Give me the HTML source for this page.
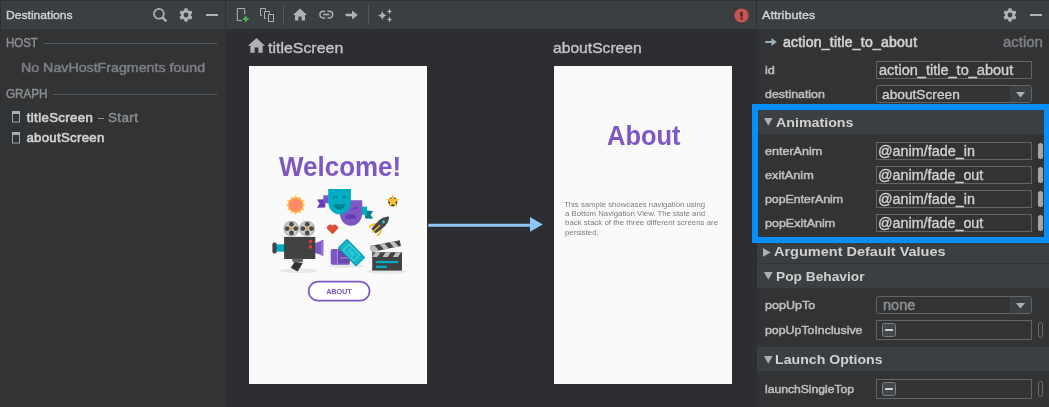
<!DOCTYPE html>
<html>
<head>
<meta charset="utf-8">
<style>
html,body{margin:0;padding:0;}
body{width:1049px;height:407px;overflow:hidden;background:#2c2e32;font-family:"Liberation Sans",sans-serif;position:relative;}
.abs{position:absolute;}
.t{position:absolute;white-space:nowrap;line-height:1;-webkit-font-smoothing:antialiased;}
#wrap{position:absolute;left:0;top:0;width:1049px;height:407px;will-change:transform;}
svg{position:absolute;overflow:visible;}
.inp{position:absolute;border:1px solid #646464;background:#313335;box-sizing:border-box;}
.sec{position:absolute;left:757px;width:292px;background:#3c3f41;}
.pillf{position:absolute;left:1038px;width:5px;height:16px;border-radius:2.5px;background:#a4a6a8;}
.pillo{position:absolute;left:1038px;width:5px;height:16px;border-radius:2.5px;border:1px solid #6a6c6e;box-sizing:border-box;}
.cb{position:absolute;left:882px;width:14px;height:14px;border-radius:2.5px;background:#43474a;border:1px solid #7c7e80;box-sizing:border-box;}
.cb i{position:absolute;left:2px;top:4.9px;width:8px;height:2.2px;background:#cfcfcf;border-radius:0.5px;}
</style>
</head>
<body>
<div id="wrap">
<!-- panel backgrounds -->
<div class="abs" style="left:0;top:0;width:225px;height:407px;background:#313335;"></div>
<div class="abs" style="left:226px;top:0;width:530px;height:407px;background:#2c2e32;"></div>
<div class="abs" style="left:757px;top:0;width:292px;height:407px;background:#313335;"></div>
<!-- header bar -->
<div class="abs" style="left:0;top:0;width:1049px;height:29px;background:#3c3f41;"></div>
<div class="abs" style="left:0;top:0;width:1049px;height:1px;background:#2e3032;"></div>
<div class="abs" style="left:0;top:0;width:1px;height:407px;background:#2e3032;"></div>
<div class="abs" style="left:225px;top:0;width:1px;height:29px;background:#2d2f31;"></div><div class="abs" style="left:225px;top:29px;width:1px;height:378px;background:#302f30;"></div>
<div class="abs" style="left:756px;top:0;width:1px;height:29px;background:#2d2f31;"></div><div class="abs" style="left:756px;top:29px;width:1px;height:378px;background:#2e2f32;"></div>

<!-- left panel lines -->
<div class="abs" style="left:44px;top:43px;width:173px;height:1px;background:#55585a;"></div>
<div class="abs" style="left:53px;top:94px;width:164px;height:1px;background:#55585a;"></div>

<div class="abs" style="left:97.6px;top:117.5px;width:6.2px;height:1.5px;background:#8b8d8f;"></div>
<!-- left header icons -->
<svg style="left:152px;top:7px;" width="16" height="16" viewBox="0 0 16 16"><circle cx="6.9" cy="6.8" r="4.9" fill="none" stroke="#afb1b3" stroke-width="1.8"/><path d="M10.3 10.3 L14.4 14.4" stroke="#afb1b3" stroke-width="2.4" stroke-linecap="butt"/></svg>
<svg style="left:179px;top:8px;" width="14" height="14" viewBox="-7 -7 14 14"><g fill="#afb1b3"><circle r="5"/><rect x="-1.8" y="-6.7" width="3.6" height="13.4" rx="1.1"/><rect x="-1.8" y="-6.7" width="3.6" height="13.4" rx="1.1" transform="rotate(60)"/><rect x="-1.8" y="-6.7" width="3.6" height="13.4" rx="1.1" transform="rotate(120)"/></g><circle r="2.4" fill="#3c3f41"/></svg>
<div class="abs" style="left:206px;top:14px;width:12px;height:2px;background:#afb1b3;"></div>

<!-- toolbar icons -->
<svg style="left:236px;top:7px;" width="16" height="16" viewBox="0 0 16 16"><path d="M8.7 7.5 V1.5 H1.3 V13.6 H6" fill="none" stroke="#afb1b3" stroke-width="1"/><path d="M9.8 9.2 V14.8 M7 12 H12.6" stroke="#4db35a" stroke-width="2"/></svg>
<svg style="left:259px;top:7px;" width="16" height="16" viewBox="0 0 16 16"><g fill="none" stroke="#afb1b3" stroke-width="1"><path d="M6.5 3.5 V1.5 H1.5 V8.5 H3"/><path d="M10.5 6.5 V4.5 H5.5 V11.5 H7"/><rect x="9.5" y="7.5" width="5" height="7"/></g></svg>
<div class="abs" style="left:283px;top:5px;width:1px;height:20px;background:#55585a;"></div>
<svg style="left:293px;top:8px;" width="14" height="13" viewBox="0 0 14 13"><path d="M7 0.6 L14 7 H12 V12.6 H8.6 V8.4 H5.4 V12.6 H2 V7 H0 Z" fill="#afb1b3"/></svg>
<svg style="left:318.6px;top:10.2px;" width="15" height="9.4" viewBox="0 0 16 10"><g fill="none" stroke="#afb1b3" stroke-width="1.6"><path d="M6.6 1.2 H4.6 A3.6 3.6 0 0 0 4.6 8.4 H6.6"/><path d="M9 1.2 H11 A3.6 3.6 0 0 1 11 8.4 H9"/><path d="M4.6 4.8 H11" stroke-width="1.8"/></g></svg>
<svg style="left:345px;top:10px;" width="14" height="10" viewBox="0 0 14 10"><path d="M0.6 3.8 H7 V0.6 L12.8 5 L7 9.4 V6.2 H0.6 Z" fill="#afb1b3"/></svg>
<div class="abs" style="left:368px;top:5px;width:1px;height:20px;background:#55585a;"></div>
<svg style="left:377px;top:8px;" width="16" height="15" viewBox="0 0 16 15"><g fill="#afb1b3"><path d="M5.3 2.5 Q5.8 6.9 10 7.4 Q5.8 7.9 5.3 12.4 Q4.8 7.9 0.6 7.4 Q4.8 6.9 5.3 2.5Z"/><path d="M12.5 0.6 Q12.8 3.2 15.4 3.5 Q12.8 3.8 12.5 6.4 Q12.2 3.8 9.6 3.5 Q12.2 3.2 12.5 0.6Z"/><path d="M12.5 8.6 Q12.8 11.2 15.4 11.5 Q12.8 11.8 12.5 14.4 Q12.2 11.8 9.6 11.5 Q12.2 11.2 12.5 8.6Z"/></g></svg>
<!-- error icon -->
<svg style="left:733.5px;top:7.6px;" width="15" height="15" viewBox="0 0 15 15"><circle cx="7.5" cy="7.5" r="7.1" fill="#c75450"/><rect x="6.4" y="3.8" width="2.2" height="4.8" fill="#2b2b2b"/><rect x="6.4" y="9.7" width="2.2" height="1.7" fill="#2b2b2b"/></svg>
<!-- right header icons -->
<svg style="left:1003px;top:8px;" width="14" height="14" viewBox="-7 -7 14 14"><g fill="#afb1b3"><circle r="5"/><rect x="-1.8" y="-6.7" width="3.6" height="13.4" rx="1.1"/><rect x="-1.8" y="-6.7" width="3.6" height="13.4" rx="1.1" transform="rotate(60)"/><rect x="-1.8" y="-6.7" width="3.6" height="13.4" rx="1.1" transform="rotate(120)"/></g><circle r="2.4" fill="#3c3f41"/></svg>
<div class="abs" style="left:1030px;top:14px;width:12px;height:2px;background:#afb1b3;"></div>

<!-- left list icons -->
<svg style="left:12px;top:111.3px;" width="8" height="12" viewBox="0 0 8 12"><rect x="0.5" y="0.5" width="7" height="10.5" fill="none" stroke="#9aa7b0" stroke-width="1"/><rect x="0" y="0" width="8" height="3" fill="#a2b1bc"/></svg>
<svg style="left:12px;top:131.5px;" width="8" height="12" viewBox="0 0 8 12"><rect x="0.5" y="0.5" width="7" height="10.5" fill="none" stroke="#9aa7b0" stroke-width="1"/><rect x="0" y="0" width="8" height="3" fill="#a2b1bc"/></svg>

<!-- canvas -->
<svg style="left:248px;top:38px;" width="17" height="15" viewBox="0 0 17 15"><path d="M8.5 0 L17 7.8 H14.6 V14.8 H10.4 V9.6 H6.6 V14.8 H2.4 V7.8 H0 Z" fill="#afb1b3"/></svg>
<div class="abs" style="left:249px;top:66px;width:178px;height:318px;background:#fafafa;"></div>
<div class="abs" style="left:554px;top:66px;width:178px;height:318px;background:#fafafa;"></div>
<svg style="left:0;top:0;" width="1049" height="407"><rect x="308.6" y="281.7" width="61" height="19" rx="9.5" fill="#ffffff" stroke="#7e57c2" stroke-width="1.8"/></svg>
<!-- arrow -->
<svg style="left:0;top:0;" width="1049" height="407"><path d="M428.3 225.25 H532" stroke="#8ec6fa" stroke-width="2.9" fill="none"/></svg>
<svg style="left:530px;top:217.4px;" width="13" height="15" viewBox="0 0 13 15"><path d="M0 0 L12.8 7.4 L0 14.8 Z" fill="#8ec6fa"/></svg>
<svg style="left:0;top:0;" width="1049" height="407" viewBox="0 0 1049 407">
<!-- shadows -->
<ellipse cx="299" cy="270.8" rx="19" ry="2.3" fill="#e8e8e8"/>
<ellipse cx="346.3" cy="265.8" rx="17.7" ry="2.2" fill="#e8e8e8"/>
<ellipse cx="386.3" cy="271.5" rx="19.5" ry="2.4" fill="#e8e8e8"/>
<!-- sunburst -->
<g transform="translate(295.7 205)">
<path d="M0.00 -9.90 L1.76 -6.57 L4.95 -8.57 L4.81 -4.81 L8.57 -4.95 L6.57 -1.76 L9.90 0.00 L6.57 1.76 L8.57 4.95 L4.81 4.81 L4.95 8.57 L1.76 6.57 L0.00 9.90 L-1.76 6.57 L-4.95 8.57 L-4.81 4.81 L-8.57 4.95 L-6.57 1.76 L-9.90 0.00 L-6.57 -1.76 L-8.57 -4.95 L-4.81 -4.81 L-4.95 -8.57 L-1.76 -6.57 Z" fill="#fbc02d"/>
<path d="M2.10 -7.82 L2.95 -5.11 L5.73 -5.73 L5.11 -2.95 L7.82 -2.10 L5.90 0.00 L7.82 2.10 L5.11 2.95 L5.73 5.73 L2.95 5.11 L2.10 7.82 L0.00 5.90 L-2.10 7.82 L-2.95 5.11 L-5.73 5.73 L-5.11 2.95 L-7.82 2.10 L-5.90 -0.00 L-7.82 -2.10 L-5.11 -2.95 L-5.73 -5.73 L-2.95 -5.11 L-2.10 -7.82 L-0.00 -5.90 Z" fill="#ff8a65"/>
</g>
<!-- ribbons -->
<path d="M317 199.6 L325.3 199.3 V207.4 L317 207.8 L319.6 203.6 Z" fill="#673ab7"/>
<rect x="323.3" y="195.3" width="5.4" height="8" fill="#7e57c2"/>
<path d="M365.1 210.5 L373.1 211 L370.6 214.8 L373.1 218.8 L365.1 218.4 Z" fill="#00838f"/>
<rect x="361.5" y="206.6" width="5.6" height="8.2" fill="#00acc1"/>
<!-- purple mask -->
<path d="M339.9 200.2 H362.2 V213.5 A11.15 12.3 0 0 1 339.9 213.5 Z" fill="#7e57c2"/>
<path d="M352.9 209 A2.3 2 0 0 1 357.5 209 Z" fill="#673ab7"/>
<path d="M345.2 218.8 A5.65 4.6 0 0 1 356.5 218.8 Z" fill="#673ab7"/>
<!-- teal mask -->
<path d="M328.2 189 H350.9 V202 A11.35 12.5 0 0 1 328.2 202 Z" fill="#00acc1"/>
<path d="M332.9 197.8 A2.3 2 0 0 1 337.5 197.8 Z" fill="#00838f"/>
<path d="M342 197.8 A2.3 2 0 0 1 346.6 197.8 Z" fill="#00838f"/>
<path d="M333.6 204.2 H345.2 A5.8 5.4 0 0 1 333.6 204.2 Z" fill="#00838f"/>
<!-- star -->
<g transform="translate(392.8 201.2)">
<circle cy="0.6" r="4.6" fill="#424242"/>
<path d="M0 -7.2 L1.7 -2.3 L6.85 -2.2 L2.7 0.9 L4.2 5.8 L0 2.9 L-4.2 5.8 L-2.7 0.9 L-6.85 -2.2 L-1.7 -2.3 Z" fill="#fbc02d"/>
</g>
<!-- heart -->
<path d="M332.5 234.2 L327.7 229.4 A3 3 0 0 1 332.5 225.8 A3 3 0 0 1 337.3 229.4 Z" fill="#e04a38"/>
<!-- rocket -->
<g transform="translate(380.4 224.8) rotate(47)">
<path d="M-3.4 3 Q-6.6 5 -5.6 9.8" fill="none" stroke="#fbc02d" stroke-width="2"/>
<path d="M3.4 3 Q6.6 5 5.6 9.8" fill="none" stroke="#fbc02d" stroke-width="2"/>
<path d="M0 -12 Q5.2 -7 4 2 L3.2 9.4 H-3.2 L-4 2 Q-5.2 -7 0 -12 Z" fill="#484848"/>
<rect x="-0.7" y="0.5" width="1.4" height="8.6" fill="#fbc02d"/>
<circle cx="0" cy="-4.2" r="1.5" fill="#26c6da"/>
<path d="M-1.8 9.4 H1.8 L0 11.6 Z" fill="#fbc02d"/>
</g>
<!-- camera -->
<g>
<circle cx="291.3" cy="228.7" r="7.9" fill="#b5b5b5"/><circle cx="291.3" cy="228.7" r="6.6" fill="#cfcfcf"/>
<circle cx="307.1" cy="228.7" r="7.9" fill="#b5b5b5"/><circle cx="307.1" cy="228.7" r="6.6" fill="#cfcfcf"/>
<g fill="#4a4a4a">
<circle cx="291.5" cy="224.3" r="2.4"/><circle cx="291.5" cy="232.9" r="2.4"/><circle cx="287.2" cy="228.6" r="2.4"/><circle cx="295.8" cy="228.6" r="2.4"/>
<circle cx="307.2" cy="224.3" r="2.4"/><circle cx="307.2" cy="232.9" r="2.4"/><circle cx="302.9" cy="228.6" r="2.4"/><circle cx="311.5" cy="228.6" r="2.4"/>
</g>
<circle cx="291.5" cy="228.6" r="1.3" fill="#ff9800"/>
<circle cx="307.2" cy="228.6" r="1.3" fill="#ff9800"/>
<rect x="275.5" y="244.3" width="9.5" height="7.4" fill="#00acc1"/>
<rect x="272.4" y="242.6" width="4.2" height="11" rx="1.8" fill="#424242"/>
<path d="M315 243.3 L323.2 240 V255.6 L315 253 Z" fill="#7e57c2"/>
<rect x="321" y="240" width="2.4" height="15.6" fill="#9575cd"/>
<rect x="284.1" y="236.9" width="31.2" height="22.1" fill="#424242"/>
<circle cx="310.4" cy="241.5" r="1.8" fill="#e53935"/>
<circle cx="310.4" cy="246.9" r="1.8" fill="#e53935"/>
<rect x="292.3" y="258.7" width="10.6" height="3.2" fill="#616161"/>
<path d="M294.6 261.8 L302.9 263 L297.6 271.6 L290.8 267.8 Z" fill="#333"/>
</g>
<!-- tickets -->
<path d="M332.7 248.9 H349.5 V264.8 H332.7 Q330.7 264.8 330.7 262.8 V250.9 Q330.7 248.9 332.7 248.9 Z" fill="#7e57c2"/>
<rect x="337.8" y="251" width="12" height="12" fill="#6a45b0"/>
<rect x="337.1" y="249.5" width="0.8" height="14.6" fill="#b39ddb"/>
<rect x="340" y="257.3" width="9" height="1.6" fill="#9575cd"/>
<g transform="translate(351.5 252.6) rotate(45.5)">
<rect x="-13.1" y="-6.5" width="26.2" height="13" rx="1.2" fill="#0097a7"/>
<rect x="-12.1" y="-5.5" width="24.2" height="11" rx="0.8" fill="#14b4c9"/>
<rect x="-7.6" y="-4.2" width="15.2" height="8.4" fill="none" stroke="#4dd0e1" stroke-width="1"/>
<rect x="-4" y="-2" width="8" height="4" fill="#26c6da"/>
</g>
<!-- clapper -->
<rect x="372.2" y="252.2" width="29.8" height="18.4" fill="#424242"/>
<rect x="375.9" y="260.9" width="22" height="2.3" fill="#00acc1"/>
<rect x="375.9" y="265.7" width="11" height="2.3" fill="#00acc1"/>
<path d="M372.2 257 L375.4 252.2 H380.59999999999997 L377.4 257 Z M382.5 257 L385.7 252.2 H390.9 L387.7 257 Z M392.8 257 L396.0 252.2 H401.2 L398.0 257 Z" fill="#bdbdbd"/>
<g transform="translate(371.2 252) rotate(-11.2)">
<rect x="0" y="-6" width="30.3" height="6" fill="#424242"/>
<path d="M0 -6 H4.4 L7.8 0 H0 Z M9.6 -6 H14.6 L18 0 H13 Z M19.8 -6 H24.6 L28 0 H23.2 Z" fill="#bdbdbd"/>
</g>
</svg>


<!-- right panel -->
<svg style="left:765px;top:37px;" width="12" height="10" viewBox="0 0 12 10"><path d="M0.2 3.9 H6.4 V0.9 L11.8 5 L6.4 9.1 V6.1 H0.2 Z" fill="#9fb0bb"/></svg>
<div class="inp" style="left:876px;top:61px;width:156px;height:18px;"></div>
<div class="inp" style="left:876px;top:85px;width:156px;height:18px;border-radius:3px;"></div>
<div class="abs" style="left:1010px;top:86px;width:21px;height:16px;background:#3c3f41;border-radius:0 2px 2px 0;"></div>
<svg style="left:1016px;top:92px;" width="9" height="6" viewBox="0 0 9 6"><path d="M0 0 H9 L4.5 5.4 Z" fill="#adafb1"/></svg>

<div class="sec" style="top:109px;height:25px;"></div>
<svg style="left:764px;top:118px;" width="9" height="8" viewBox="0 0 9 8"><path d="M0 0 H8.6 L4.3 7.8 Z" fill="#adafb1"/></svg>
<div class="inp" style="left:876px;top:142px;width:156px;height:18px;"></div>
<div class="inp" style="left:876px;top:166px;width:156px;height:18px;"></div>
<div class="inp" style="left:876px;top:190px;width:156px;height:18px;"></div>
<div class="inp" style="left:876px;top:214px;width:156px;height:18px;"></div>
<div class="pillf" style="top:143px;"></div>
<div class="pillf" style="top:167px;"></div>
<div class="pillf" style="top:191px;"></div>
<div class="pillf" style="top:215px;"></div>

<div class="sec" style="top:238px;height:25px;"></div>
<svg style="left:763px;top:247.5px;" width="8" height="9" viewBox="0 0 8 9"><path d="M0 0 L7.6 4.4 L0 8.8 Z" fill="#adafb1"/></svg>
<div class="sec" style="top:264px;height:24px;"></div>
<svg style="left:764.4px;top:272.2px;" width="9" height="8" viewBox="0 0 9 8"><path d="M0 0 H8.6 L4.3 7.8 Z" fill="#adafb1"/></svg>
<div class="inp" style="left:876px;top:296px;width:156px;height:18px;border-radius:3px;"></div>
<div class="abs" style="left:1010px;top:297px;width:21px;height:16px;background:#3c3f41;border-radius:0 2px 2px 0;"></div>
<svg style="left:1016px;top:303px;" width="9" height="6" viewBox="0 0 9 6"><path d="M0 0 H9 L4.5 5.4 Z" fill="#adafb1"/></svg>
<div class="inp" style="left:876px;top:320px;width:156px;height:20px;"></div>
<div class="cb" style="top:323.3px;"><i></i></div>
<div class="pillo" style="top:322.3px;"></div>
<div class="sec" style="top:347.4px;height:24px;"></div>
<svg style="left:764.4px;top:355.5px;" width="9" height="8" viewBox="0 0 9 8"><path d="M0 0 H8.6 L4.3 7.8 Z" fill="#adafb1"/></svg>
<div class="inp" style="left:876px;top:379px;width:156px;height:20px;"></div>
<div class="cb" style="top:382.3px;"><i></i></div>
<div class="pillo" style="top:381.3px;"></div>

<!-- highlight -->
<div class="abs" style="left:752.2px;top:104.2px;width:297.4px;height:5.4px;background:#048ffe;"></div>
<div class="abs" style="left:752.2px;top:237.4px;width:297.4px;height:5.6px;background:#048ffe;"></div>
<div class="abs" style="left:752.2px;top:104.2px;width:5.4px;height:138.8px;background:#048ffe;"></div>
<div class="abs" style="left:1044.2px;top:104.2px;width:5.4px;height:138.8px;background:#048ffe;"></div>
<div class="t" style="font-size:11.4px;color:#d3d3d3;-webkit-text-stroke:0.35px;left:5.73px;transform:scaleX(1.0631);transform-origin:0 0;top:10.26px;">Destinations</div>
<div class="t" style="font-size:12.6px;color:#8b8d8f;-webkit-text-stroke:0.5px;left:5.79px;transform:scaleX(0.9072);transform-origin:0 0;top:37.26px;">HOST</div>
<div class="t" style="font-size:13.4px;color:#7d7f81;-webkit-text-stroke:0.5px;left:20.66px;transform:scaleX(1.0615);transform-origin:0 0;top:61.25px;">No NavHostFragments found</div>
<div class="t" style="font-size:12.6px;color:#8b8d8f;-webkit-text-stroke:0.5px;left:5.82px;transform:scaleX(0.9258);transform-origin:0 0;top:88.26px;">GRAPH</div>
<div class="t" style="font-size:13.2px;color:#d0d0d0;-webkit-text-stroke:0.65px;left:26.80px;letter-spacing:0.364px;top:111.26px;">titleScreen</div>
<div class="t" style="font-size:13.5px;color:#8b8d8f;-webkit-text-stroke:0.5px;left:107.89px;letter-spacing:0.409px;top:111.26px;">Start</div>
<div class="t" style="font-size:13.2px;color:#d0d0d0;-webkit-text-stroke:0.65px;left:26.47px;letter-spacing:0.298px;top:131.26px;">aboutScreen</div>
<div class="t" style="font-size:15.2px;color:#c4c4c4;-webkit-text-stroke:0.35px;left:268.06px;transform:scaleX(1.0487);transform-origin:0 0;top:40.25px;">titleScreen</div>
<div class="t" style="font-size:15.2px;color:#c4c4c4;-webkit-text-stroke:0.35px;left:552.67px;transform:scaleX(1.0300);transform-origin:0 0;top:40.25px;">aboutScreen</div>
<div class="t" style="font-size:11.4px;color:#d3d3d3;-webkit-text-stroke:0.35px;left:762.20px;transform:scaleX(1.1056);transform-origin:0 0;top:10.26px;">Attributes</div>
<div class="t" style="font-size:14px;color:#d0d0d0;-webkit-text-stroke:0.65px;left:782.94px;letter-spacing:0.244px;top:35.26px;">action_title_to_about</div>
<div class="t" style="font-size:13.8px;color:#7d7f81;-webkit-text-stroke:0.5px;left:1003.40px;transform:scaleX(1.0839);transform-origin:0 0;top:36.25px;">action</div>
<div class="t" style="font-size:11.2px;color:#bdbdbd;-webkit-text-stroke:0.5px;left:764.87px;transform:scaleX(1.1363);transform-origin:0 0;top:65.26px;">id</div>
<div class="t" style="font-size:11.2px;color:#bdbdbd;-webkit-text-stroke:0.5px;left:765.00px;transform:scaleX(1.1067);transform-origin:0 0;top:89.26px;">destination</div>
<div class="t" style="font-size:13.8px;color:#d0d0d0;-webkit-text-stroke:0.35px;left:878.82px;transform:scaleX(1.0538);transform-origin:0 0;top:64.25px;">action_title_to_about</div>
<div class="t" style="font-size:13.6px;color:#d0d0d0;-webkit-text-stroke:0.35px;left:882.45px;transform:scaleX(1.0086);transform-origin:0 0;top:88.25px;">aboutScreen</div>
<div class="t" style="font-size:13.3px;color:#d0d0d0;font-weight:bold;left:775.82px;transform:scaleX(1.0702);transform-origin:0 0;top:116.26px;">Animations</div>
<div class="t" style="font-size:11.2px;color:#bdbdbd;-webkit-text-stroke:0.5px;left:764.80px;transform:scaleX(1.1224);transform-origin:0 0;top:146.26px;">enterAnim</div>
<div class="t" style="font-size:11.2px;color:#bdbdbd;-webkit-text-stroke:0.5px;left:764.79px;transform:scaleX(1.1366);transform-origin:0 0;top:170.26px;">exitAnim</div>
<div class="t" style="font-size:11.2px;color:#bdbdbd;-webkit-text-stroke:0.5px;left:764.76px;transform:scaleX(1.1021);transform-origin:0 0;top:194.26px;">popEnterAnim</div>
<div class="t" style="font-size:11.2px;color:#bdbdbd;-webkit-text-stroke:0.5px;left:764.75px;transform:scaleX(1.1155);transform-origin:0 0;top:218.26px;">popExitAnim</div>
<div class="t" style="font-size:13.8px;color:#d0d0d0;-webkit-text-stroke:0.35px;left:877.72px;transform:scaleX(1.0422);transform-origin:0 0;top:145.25px;">@anim/fade_in</div>
<div class="t" style="font-size:13.8px;color:#d0d0d0;-webkit-text-stroke:0.35px;left:877.73px;transform:scaleX(1.0379);transform-origin:0 0;top:169.25px;">@anim/fade_out</div>
<div class="t" style="font-size:13.8px;color:#d0d0d0;-webkit-text-stroke:0.35px;left:877.72px;transform:scaleX(1.0422);transform-origin:0 0;top:193.25px;">@anim/fade_in</div>
<div class="t" style="font-size:13.8px;color:#d0d0d0;-webkit-text-stroke:0.35px;left:877.73px;transform:scaleX(1.0379);transform-origin:0 0;top:217.25px;">@anim/fade_out</div>
<div class="t" style="font-size:13.3px;color:#d0d0d0;font-weight:bold;left:773.91px;transform:scaleX(1.0902);transform-origin:0 0;top:245.26px;">Argument Default Values</div>
<div class="t" style="font-size:13.3px;color:#d0d0d0;font-weight:bold;left:775.61px;transform:scaleX(1.0333);transform-origin:0 0;top:270.26px;">Pop Behavior</div>
<div class="t" style="font-size:11.2px;color:#bdbdbd;-webkit-text-stroke:0.5px;left:764.85px;transform:scaleX(1.1190);transform-origin:0 0;top:300.26px;">popUpTo</div>
<div class="t" style="font-size:11.2px;color:#bdbdbd;-webkit-text-stroke:0.5px;left:764.86px;transform:scaleX(1.1034);transform-origin:0 0;top:325.26px;">popUpToInclusive</div>
<div class="t" style="font-size:13.8px;color:#8b8d8f;-webkit-text-stroke:0.5px;left:882.55px;transform:scaleX(1.0570);transform-origin:0 0;top:299.25px;">none</div>
<div class="t" style="font-size:13.3px;color:#d0d0d0;font-weight:bold;left:775.48px;transform:scaleX(1.0633);transform-origin:0 0;top:353.26px;">Launch Options</div>
<div class="t" style="font-size:11.2px;color:#bdbdbd;-webkit-text-stroke:0.5px;left:764.81px;transform:scaleX(1.0851);transform-origin:0 0;top:384.26px;">launchSingleTop</div>
<div class="t" style="font-size:28.5px;color:#7e57c2;font-weight:bold;left:279.00px;transform:scaleX(0.9114);transform-origin:0 0;top:152.26px;">Welcome!</div>
<div class="t" style="font-size:28.3px;color:#7e57c2;font-weight:bold;left:607.09px;transform:scaleX(0.9008);transform-origin:0 0;top:121.26px;">About</div>
<div class="t" style="font-size:7.4px;color:#7e57c2;font-weight:bold;left:326.15px;letter-spacing:-0.179px;top:288.26px;">ABOUT</div>
<div class="t" style="font-size:8.1px;color:#7c7c7c;left:564.24px;transform:scaleX(0.9622);transform-origin:0 0;top:201.26px;">This sample showcases navigation using</div>
<div class="t" style="font-size:8.1px;color:#7c7c7c;left:565.19px;transform:scaleX(0.9596);transform-origin:0 0;top:210.26px;">a Bottom Navigation View. The state and</div>
<div class="t" style="font-size:8.1px;color:#7c7c7c;left:565.03px;transform:scaleX(0.9731);transform-origin:0 0;top:219.26px;">back stack of the three different screens are</div>
<div class="t" style="font-size:8.1px;color:#7c7c7c;left:565.03px;transform:scaleX(0.9581);transform-origin:0 0;top:229.26px;">persisted.</div>
</div>
</body>
</html>
